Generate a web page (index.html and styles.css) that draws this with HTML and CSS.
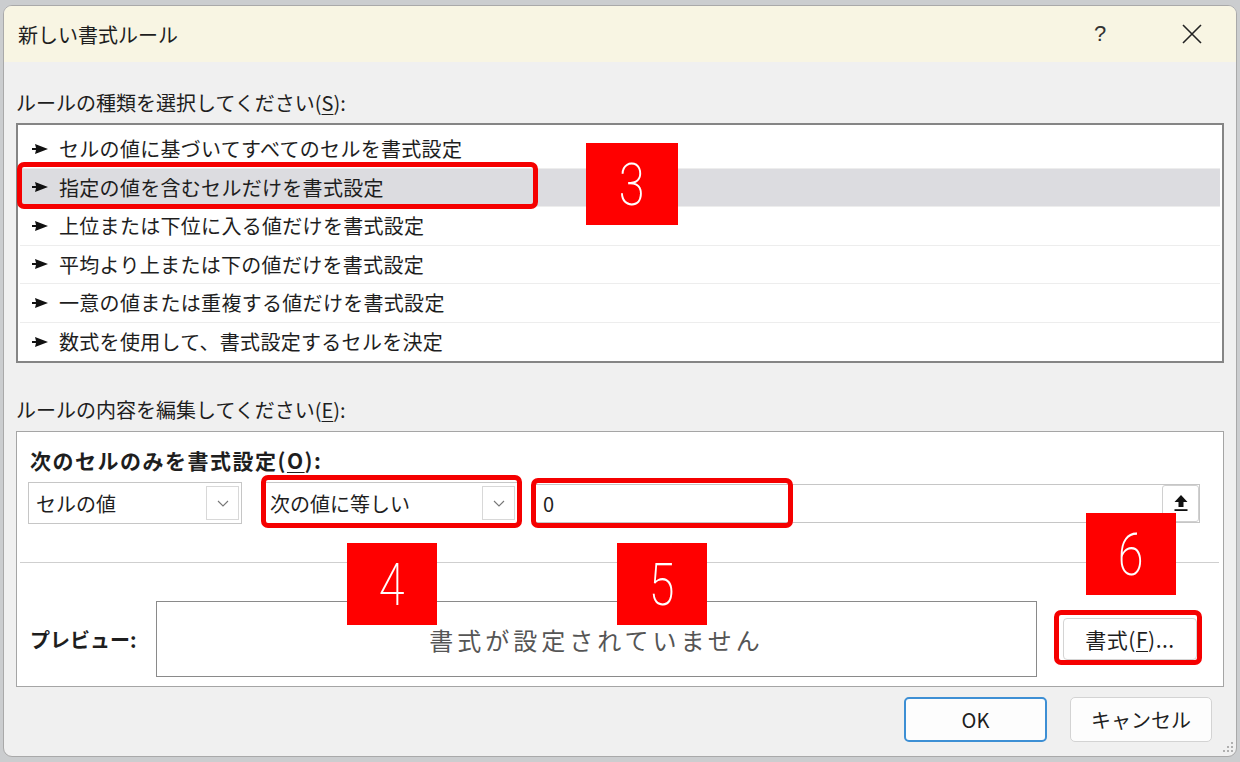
FILE: index.html
```html
<!DOCTYPE html>
<html lang="ja">
  <head>
    <meta charset="UTF-8" />
    <meta name="viewport" content="width=device-width, initial-scale=1.0" />
    <title>新しい書式ルール</title>
    <link rel="stylesheet" href="styles.css">
  </head>
  <body>
    <div class="dialog">
      <div class="title-bar">
        <span class="title">新しい書式ルール</span>
        <span class="help">?</span>
        <span class="close">
          <svg width="22" height="22" viewBox="0 0 22 22"><path d="M2 2 L20 20 M20 2 L2 20" stroke="#222" stroke-width="1.6" fill="none"/></svg>
        </span>
      </div>

      <div class="body">
        <div class="label first">ルールの種類を選択してください(<u>S</u>):</div>
        <ul class="rule-list">
          <li><svg class="arrow" width="16" height="10" viewBox="0 0 16 10"><path d="M0 4 H4 L3 0 L16 5 L3 10 L4 6 H0 Z"/></svg>セルの値に基づいてすべてのセルを書式設定</li>
          <li class="selected"><svg class="arrow" width="16" height="10" viewBox="0 0 16 10"><path d="M0 4 H4 L3 0 L16 5 L3 10 L4 6 H0 Z"/></svg>指定の値を含むセルだけを書式設定</li>
          <li><svg class="arrow" width="16" height="10" viewBox="0 0 16 10"><path d="M0 4 H4 L3 0 L16 5 L3 10 L4 6 H0 Z"/></svg>上位または下位に入る値だけを書式設定</li>
          <li><svg class="arrow" width="16" height="10" viewBox="0 0 16 10"><path d="M0 4 H4 L3 0 L16 5 L3 10 L4 6 H0 Z"/></svg>平均より上または下の値だけを書式設定</li>
          <li><svg class="arrow" width="16" height="10" viewBox="0 0 16 10"><path d="M0 4 H4 L3 0 L16 5 L3 10 L4 6 H0 Z"/></svg>一意の値または重複する値だけを書式設定</li>
          <li><svg class="arrow" width="16" height="10" viewBox="0 0 16 10"><path d="M0 4 H4 L3 0 L16 5 L3 10 L4 6 H0 Z"/></svg>数式を使用して、書式設定するセルを決定</li>
        </ul>

        <div class="label second">ルールの内容を編集してください(<u>E</u>):</div>
        <div class="panel">
          <div class="panel-heading">次のセルのみを書式設定(<u>O</u>):</div>
          <div class="controls">
            <div class="combo combo-type">
              <span>セルの値</span>
              <span class="drop">
                <svg width="12" height="7" viewBox="0 0 12 7"><path d="M1 1 L6 6 L11 1" stroke="#777" stroke-width="1.1" fill="none"/></svg>
              </span>
            </div>
            <div class="combo combo-op">
              <span>次の値に等しい</span>
              <span class="drop">
                <svg width="12" height="7" viewBox="0 0 12 7"><path d="M1 1 L6 6 L11 1" stroke="#777" stroke-width="1.1" fill="none"/></svg>
              </span>
            </div>
            <div class="value-input">
              <span>0</span>
              <span class="ref-btn">
                <svg width="16" height="20" viewBox="0 0 16 20"><path d="M8 2 L14.5 9 H10.5 V14 H5.5 V9 H1.5 Z" fill="#111"/><rect x="1.5" y="16.2" width="13" height="1.8" fill="#111"/></svg>
              </span>
            </div>
          </div>
          <div class="separator"></div>
          <div class="preview-row">
            <div class="preview-label">プレビュー:</div>
            <div class="preview-box">書式が設定されていません</div>
            <div class="format-btn">書式(<u>F</u>)...</div>
          </div>
        </div>

        <div class="footer">
          <div class="btn btn-ok">OK</div>
          <div class="btn">キャンセル</div>
        </div>
      </div>

      <!-- annotations -->
      <div class="mark mark-a"></div>
      <div class="mark mark-b"></div>
      <div class="mark mark-c"></div>
      <div class="mark mark-d"></div>
      <div class="num num-3"><span>3</span></div>
      <div class="num num-4"><span>4</span></div>
      <div class="num num-5"><span>5</span></div>
      <div class="num num-6"><span>6</span></div>

      <svg class="grip" width="14" height="14" viewBox="0 0 14 14">
        <circle cx="12" cy="3" r="1.1"/><circle cx="8" cy="7" r="1.1"/><circle cx="12" cy="7" r="1.1"/>
        <circle cx="4" cy="11" r="1.1"/><circle cx="8" cy="11" r="1.1"/><circle cx="12" cy="11" r="1.1"/>
      </svg>
    </div>
  </body>
</html>
```

FILE: styles.css
```css
* {
  box-sizing: border-box;
}

body {
  margin: 0;
  width: 1240px;
  height: 762px;
  overflow: hidden;
  background: #cbcdcf;
  font-family: "Noto Sans CJK JP", "Noto Sans", sans-serif;
  color: #1e1e1e;
}

u {
  text-decoration-thickness: 1px;
  text-underline-offset: 3px;
}

.dialog {
  position: relative;
  margin: 5px 3px;
  width: 1234px;
  height: 752px;
  background: #f0f0f0;
  border: 1px solid #a9a9a9;
  border-radius: 9px;
  overflow: hidden;
}

/* title */
.title-bar {
  display: flex;
  align-items: center;
  height: 56px;
  padding-left: 14px;
  background: #f8f5e3;
  font-size: 20px;
}

.title {
  flex: 1;
}

.help {
  width: 30px;
  text-align: center;
  font-family: "Liberation Sans", sans-serif;
  font-size: 22px;
  color: #333;
}

.close {
  display: flex;
  margin: 0 33px 0 66px;
}

/* body */
.body {
  padding: 0 12px;
}

.label {
  height: 24px;
  line-height: 24px;
  font-size: 20px;
}

.label.first {
  margin: 29px 0 8px;
}

.label.second {
  margin: 35px 0 9px;
}

.rule-list {
  list-style: none;
  margin: 0;
  height: 240px;
  padding: 5px 2px 0;
  background: #fff;
  border: 2px solid #858585;
}

.rule-list li {
  display: flex;
  align-items: center;
  height: 38.5px;
  padding-left: 12px;
  font-size: 20px;
  letter-spacing: 0.3px;
  border-bottom: 1px solid #ededed;
}

.rule-list li:last-child {
  border-bottom: none;
}

.rule-list li.selected {
  background: #dcdce0;
}

.arrow {
  fill: #111;
  margin-right: 11px;
}

/* edit panel */
.panel {
  height: 256px;
  padding: 16px 0 0 11px;
  background: #fff;
  border: 1px solid #a5a5a5;
}

.panel-heading {
  height: 24px;
  line-height: 24px;
  margin-left: 2px;
  font-size: 21px;
  letter-spacing: 1.5px;
  font-weight: 700;
}

.controls {
  display: flex;
  align-items: center;
  height: 42px;
  margin-top: 10px;
}

.combo {
  display: flex;
  align-items: center;
  justify-content: space-between;
  height: 42px;
  padding: 0 2px 0 7px;
  border: 1px solid #c6c6c6;
  font-size: 20px;
}

.combo-type {
  width: 214px;
}

.combo-op {
  width: 256px;
  margin-left: 20px;
}

.drop {
  display: flex;
  align-items: center;
  justify-content: center;
  width: 33px;
  height: 34px;
  border: 1px solid #d8d8d8;
}

.value-input {
  display: flex;
  align-items: center;
  justify-content: space-between;
  width: 667px;
  height: 39px;
  margin-left: 15px;
  padding-left: 9px;
  border: 1px solid #c6c6c6;
  font-size: 20px;
}

.ref-btn {
  display: flex;
  align-items: center;
  justify-content: center;
  width: 37px;
  height: 37px;
  border: 1px solid #d0d0d0;
  border-radius: 3px;
}

.separator {
  height: 1px;
  margin: 38px 4px 38px -8px;
  background: #cfcfcf;
}

.preview-row {
  display: flex;
  align-items: center;
}

.preview-label {
  width: 126px;
  margin-left: 2px;
  font-size: 20px;
  font-weight: 700;
}

.preview-box {
  display: flex;
  align-items: center;
  justify-content: center;
  width: 881px;
  height: 76px;
  border: 1px solid #8a8a8a;
  font-size: 24px;
  letter-spacing: 4px;
  color: #555;
}

.format-btn {
  display: flex;
  align-items: center;
  justify-content: center;
  width: 134px;
  height: 42px;
  margin-left: 26px;
  border: 1px solid #d4d4d4;
  border-radius: 4px;
  font-size: 21px;
  letter-spacing: 0.5px;
}

/* buttons */
.footer {
  display: flex;
  justify-content: flex-end;
  gap: 23px;
  margin: 10px 12px 0 0;
}

.btn {
  display: flex;
  align-items: center;
  justify-content: center;
  width: 142px;
  height: 45px;
  background: #fdfdfd;
  border: 1px solid #d3d3d3;
  border-radius: 5px;
  font-size: 20px;
}

.btn-ok {
  width: 143px;
  border: 2px solid #3d8fd4;
}

/* annotations */
.mark {
  position: absolute;
  border: 5px solid #f50000;
  border-radius: 7px;
}

.mark-a { left: 13px; top: 156px; width: 521px; height: 47px; }
.mark-b { left: 257px; top: 469px; width: 261px; height: 53px; }
.mark-c { left: 527px; top: 472px; width: 262px; height: 50px; }
.mark-d { left: 1050px; top: 604px; width: 148px; height: 55px; }

.num {
  position: absolute;
  display: flex;
  align-items: center;
  justify-content: center;
  width: 90px;
  height: 82px;
  background: #ff0000;
  color: #fff;
  font-family: Roboto, "Noto Sans", sans-serif;
  font-weight: 200;
  font-size: 60px;
}

.num span {
  display: block;
  transform: scaleX(0.78);
}

.num-3 { left: 582px; top: 137px; width: 92px; }
.num-4 { left: 343px; top: 537px; }
.num-5 { left: 613px; top: 537px; }
.num-6 { left: 1082px; top: 507px; }

.grip {
  position: absolute;
  right: 2px;
  bottom: 2px;
  fill: #a0a0a0;
}
```
